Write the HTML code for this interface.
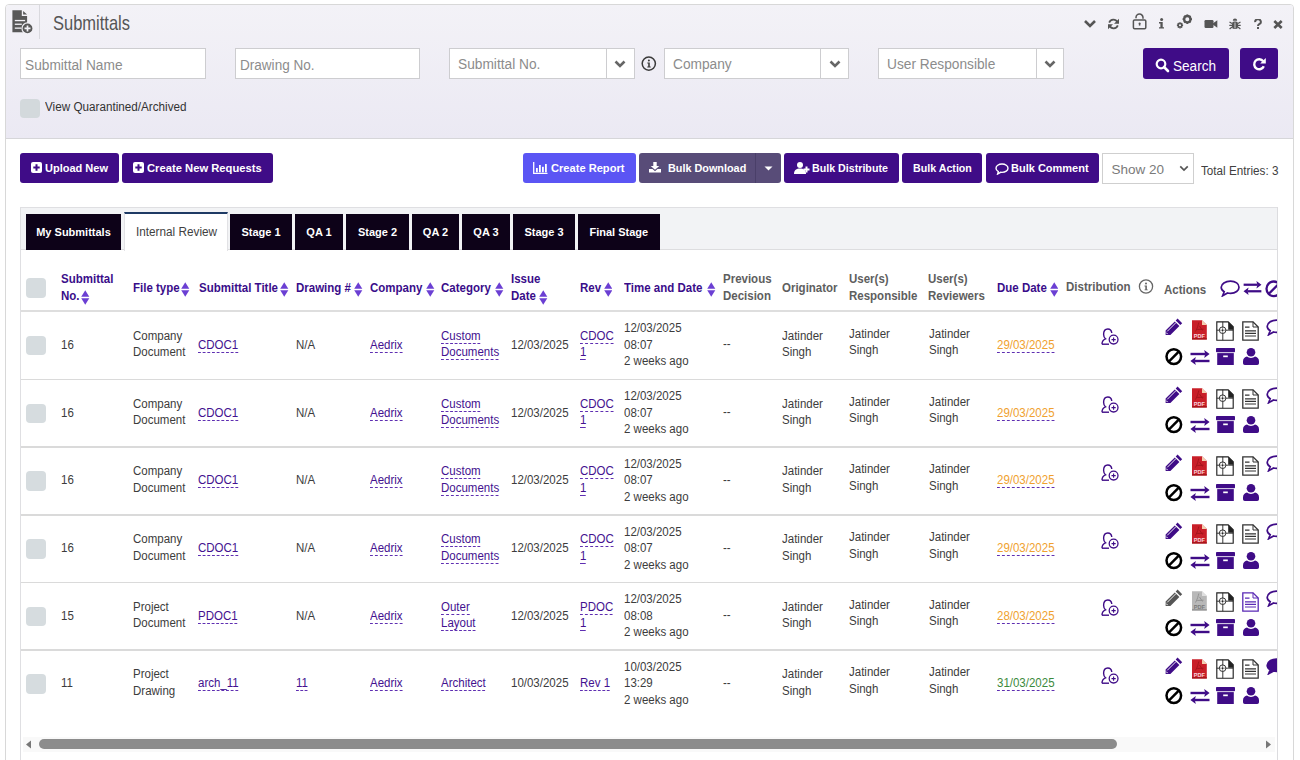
<!DOCTYPE html><html><head><meta charset="utf-8"><style>
*{box-sizing:border-box;margin:0;padding:0}
html,body{width:1300px;height:760px;overflow:hidden;background:#fff;font-family:"Liberation Sans",sans-serif;color:#333}
.a{position:absolute}
.t{white-space:nowrap}
.inp{position:absolute;background:#fff;border:1px solid #cdcdd0;height:31px}
.btn{position:absolute;height:30px;border-radius:3px;background:#3f0c87}
.lk{text-decoration:underline dashed #5b2ab0;text-underline-offset:3px;text-decoration-thickness:1px}
.cb{position:absolute;width:20px;height:20px;border-radius:4px;background:#d6dcdf}
svg{display:block}
</style></head><body>
<div class="a" style="left:5px;top:4px;width:1289px;height:800px;border:1px solid #d8d8d8;border-radius:4px 4px 0 0;background:#fff;overflow:hidden"><div class="a" style="left:0;top:0;width:1287px;height:134px;background:linear-gradient(#f3f2f7,#ebe9f3);border-bottom:1px solid #d6d6d9"></div></div>
<div class="a" style="left:39px;top:5px;width:1px;height:34px;background:#d9d9de"></div>
<svg class="a" style="left:11px;top:9px" width="24" height="26" viewBox="0 0 24 26">
<path d="M1.4 1.2H10.8V7.1H16.1V23.3H1.4Z" fill="#585858"/>
<path d="M12.1 2.1L16.1 5.6H12.1Z" fill="#585858"/>
<rect x="3.8" y="10.9" width="10.3" height="1.3" fill="#f2f1f6"/>
<rect x="3.8" y="14.6" width="7" height="1.3" fill="#f2f1f6"/>
<rect x="3.8" y="18.5" width="6.5" height="1.3" fill="#f2f1f6"/>
<circle cx="16.5" cy="19.4" r="6.1" fill="#f2f1f6"/>
<circle cx="16.5" cy="19.4" r="4.9" fill="#585858"/>
<path d="M16.5 16.4V22.4M13.5 19.4H19.5" stroke="#f2f1f6" stroke-width="1.7"/>
</svg>
<div class="a t" style="left:53px;top:12.3px;font-size:19px;line-height:22px;color:#555;transform:scale(0.868,1.07);transform-origin:0 0">Submittals</div>
<svg class="a" style="left:1083px;top:19px" width="14" height="10" viewBox="0 0 14 10"><path d="M2 2L7 7L12 2" fill="none" stroke="#555" stroke-width="2.6"/></svg>
<svg class="a" style="left:1107px;top:18px" width="13" height="12" viewBox="0 0 13 12"><path d="M10.4 4.3A4.4 4.4 0 0 0 2.2 4.6" fill="none" stroke="#555" stroke-width="1.7"/><path d="M12 0.8V5.8H7Z" fill="#555"/><path d="M2.6 7.7A4.4 4.4 0 0 0 10.8 7.4" fill="none" stroke="#555" stroke-width="1.7"/><path d="M1 11.2V6.2H6Z" fill="#555"/></svg>
<svg class="a" style="left:1131px;top:13px" width="17" height="17" viewBox="0 0 17 17"><path d="M5 5.2V4.6A3.5 3.5 0 0 1 12 4.6V5.8" fill="none" stroke="#555" stroke-width="1.5"/><rect x="2.4" y="6.9" width="12.4" height="8.9" rx="1.2" fill="none" stroke="#555" stroke-width="1.5"/><path d="M8.6 10.2V12.6" stroke="#555" stroke-width="1.5"/><circle cx="8.6" cy="10.4" r="1" fill="#555"/></svg>
<svg class="a" style="left:1158px;top:18px" width="7" height="11" viewBox="0 0 7 11"><circle cx="3.6" cy="1.5" r="1.5" fill="#555"/><path d="M1 4H4.7V9.2H6V10.6H1V9.2H2.4V5.4H1Z" fill="#555"/></svg>
<svg class="a" style="left:1176px;top:14px" width="17" height="15" viewBox="0 0 17 15"><circle cx="11.3" cy="5.2" r="3.2" fill="none" stroke="#555" stroke-width="2.4"/><path d="M11.3 0.5V2M11.3 8.4V9.9M6.6 5.2H8.1M14.5 5.2H16M8 1.9L9 2.9M13.6 7.5L14.6 8.5M8 8.5L9 7.5M13.6 2.9L14.6 1.9" stroke="#555" stroke-width="1.8"/><circle cx="4" cy="11.3" r="1.8" fill="none" stroke="#555" stroke-width="1.5"/><path d="M4 8.2V9.4M4 13.2V14.4M0.9 11.3H2.1M5.9 11.3H7.1M1.8 9.1L2.6 9.9M5.4 12.7L6.2 13.5M1.8 13.5L2.6 12.7M5.4 9.9L6.2 9.1" stroke="#555" stroke-width="1.4"/></svg>
<svg class="a" style="left:1204px;top:19px" width="14" height="10" viewBox="0 0 14 10"><rect x="0.5" y="1" width="9" height="8" rx="1.2" fill="#555"/><path d="M9 4.2L13.3 1.2V8.8L9 5.8Z" fill="#555"/></svg>
<svg class="a" style="left:1229px;top:18px" width="12" height="12" viewBox="0 0 12 12"><path d="M3.8 2.8A2.2 2.2 0 0 1 8.2 2.8Z" fill="#555"/><rect x="3" y="3.6" width="6" height="7.4" rx="2.2" fill="#555"/><path d="M0.5 4L3 5.5M11.5 4L9 5.5M0.3 7.3H3M11.7 7.3H9M0.6 11L3 9M11.4 11L9 9" stroke="#555" stroke-width="1.2"/><path d="M6 4.5V10.5" stroke="#eeedf3" stroke-width="0.8"/></svg>
<svg class="a" style="left:1254px;top:19px" width="8" height="10" viewBox="0 0 8 10"><path d="M1.2 3.2A2.8 2.6 0 1 1 5.2 5.2C4.2 5.8 4 6.2 4 7" fill="none" stroke="#555" stroke-width="2"/><rect x="3" y="8" width="2" height="2" fill="#555"/></svg>
<svg class="a" style="left:1273px;top:20px" width="10" height="9" viewBox="0 0 10 9"><path d="M1.3 1L8.7 8M8.7 1L1.3 8" stroke="#555" stroke-width="2.6"/></svg>
<div class="inp" style="left:20px;top:48px;width:186px"></div>
<div class="a t" style="left:25.4px;top:57.00px;font-size:14px;line-height:16.1px;color:#8c8c8c;transform:scaleX(0.979);transform-origin:0 0;">Submittal Name</div>
<div class="inp" style="left:235px;top:48px;width:185px"></div>
<div class="a t" style="left:240px;top:57.00px;font-size:14px;line-height:16.1px;color:#8c8c8c;transform:scaleX(0.968);transform-origin:0 0;">Drawing No.</div>
<div class="inp" style="left:449px;top:48px;width:186px"></div>
<div class="a t" style="left:458px;top:55.90px;font-size:14px;line-height:16.1px;color:#8c8c8c;transform:scaleX(0.98);transform-origin:0 0;">Submittal No.</div>
<div class="a" style="left:606px;top:48px;width:1px;height:31px;background:#cdcdd0"></div>
<svg class="a" style="left:614px;top:60px" width="12" height="8" viewBox="0 0 12 8"><path d="M1.5 1.5L6 6L10.5 1.5" fill="none" stroke="#666" stroke-width="2.6"/></svg>
<svg class="a" style="left:641px;top:56px" width="16" height="16" viewBox="0 0 16 16"><circle cx="7.8" cy="7.6" r="6.6" fill="none" stroke="#3a3a3a" stroke-width="1.5"/><circle cx="7.9" cy="4.6" r="1" fill="#3a3a3a"/><path d="M6.3 6.6H8.8V10.6H9.7V11.5H6.3V10.6H7.2V7.5H6.3Z" fill="#3a3a3a"/></svg>
<div class="inp" style="left:664px;top:48px;width:185px"></div>
<div class="a t" style="left:672.5px;top:55.90px;font-size:14px;line-height:16.1px;color:#8c8c8c;transform:scaleX(0.98);transform-origin:0 0;">Company</div>
<div class="a" style="left:820px;top:48px;width:1px;height:31px;background:#cdcdd0"></div>
<svg class="a" style="left:829px;top:60px" width="12" height="8" viewBox="0 0 12 8"><path d="M1.5 1.5L6 6L10.5 1.5" fill="none" stroke="#666" stroke-width="2.6"/></svg>
<div class="inp" style="left:878px;top:48px;width:186px"></div>
<div class="a t" style="left:887px;top:55.90px;font-size:14px;line-height:16.1px;color:#8c8c8c;transform:scaleX(0.98);transform-origin:0 0;">User Responsible</div>
<div class="a" style="left:1036px;top:48px;width:1px;height:31px;background:#cdcdd0"></div>
<svg class="a" style="left:1044px;top:60px" width="12" height="8" viewBox="0 0 12 8"><path d="M1.5 1.5L6 6L10.5 1.5" fill="none" stroke="#666" stroke-width="2.6"/></svg>
<div class="btn" style="left:1143px;top:48px;width:86px;height:31px"></div>
<div class="a t" style="left:1173px;top:58.40px;font-size:14px;line-height:16.1px;color:#fff;transform:scaleX(0.97);transform-origin:0 0;">Search</div>
<svg class="a" style="left:1155px;top:58px" width="15" height="15" viewBox="0 0 15 15"><circle cx="6" cy="6" r="4.3" fill="none" stroke="#fff" stroke-width="2.2"/><path d="M9 9L13 13" stroke="#fff" stroke-width="2.6" stroke-linecap="round"/></svg>
<div class="btn" style="left:1240px;top:48px;width:38px;height:31px"></div>
<svg class="a" style="left:1252px;top:57px" width="15" height="14" viewBox="0 0 15 14"><path d="M11.2 4.2A5 5 0 1 0 11.8 9.2" fill="none" stroke="#fff" stroke-width="2.4"/><path d="M13.8 1V6.6H8.2Z" fill="#fff"/></svg>
<div class="cb" style="left:20.4px;top:98.5px;width:19.3px;height:19.3px;background:#d3d9dc"></div>
<div class="a t" style="left:44.8px;top:100.74px;font-size:12px;line-height:13.8px;color:#333;transform:scaleX(0.975);transform-origin:0 0;">View Quarantined/Archived</div>
<div class="btn" style="left:20px;top:153px;width:99px"></div>
<svg class="a" style="left:31px;top:162px" width="11" height="11" viewBox="0 0 11 11"><rect x="0" y="0" width="11" height="11" rx="2" fill="#fff"/><path d="M5.5 2.3V8.7M2.3 5.5H8.7" stroke="#3f0c87" stroke-width="2"/></svg>
<div class="a t" style="left:45px;top:162.26px;font-size:11px;line-height:12.65px;color:#fff;font-weight:bold;">Upload New</div>
<div class="btn" style="left:122px;top:153px;width:151px"></div>
<svg class="a" style="left:133px;top:162px" width="11" height="11" viewBox="0 0 11 11"><rect x="0" y="0" width="11" height="11" rx="2" fill="#fff"/><path d="M5.5 2.3V8.7M2.3 5.5H8.7" stroke="#3f0c87" stroke-width="2"/></svg>
<div class="a t" style="left:147px;top:162.26px;font-size:11px;line-height:12.65px;color:#fff;font-weight:bold;transform:scaleX(1.02);transform-origin:0 0;">Create New Requests</div>
<div class="btn" style="left:523px;top:153px;width:113px;background:#5b55f4"></div>
<div class="a t" style="left:551px;top:162.26px;font-size:11px;line-height:12.65px;color:#fff;font-weight:bold;transform:scaleX(1.01);transform-origin:0 0;">Create Report</div>
<svg class="a" style="left:533px;top:162px" width="15" height="12" viewBox="0 0 15 12"><path d="M0.7 0V11.3H14.5" fill="none" stroke="#fff" stroke-width="1.3"/><rect x="3" y="6" width="1.8" height="4.3" fill="#fff"/><rect x="6" y="3" width="1.8" height="7.3" fill="#fff"/><rect x="9" y="4.8" width="1.8" height="5.5" fill="#fff"/><rect x="12" y="2" width="1.8" height="8.3" fill="#fff"/></svg>
<div class="btn" style="left:639px;top:153px;width:142px;background:#584c78"></div>
<div class="a" style="left:755px;top:153px;width:1px;height:30px;background:#4a3f69"></div>
<div class="a t" style="left:668px;top:162.26px;font-size:11px;line-height:12.65px;color:#fff;font-weight:bold;transform:scaleX(0.985);transform-origin:0 0;">Bulk Download</div>
<svg class="a" style="left:649px;top:162px" width="12" height="10.5" viewBox="0 0 12 12" preserveAspectRatio="none"><path d="M4.3 0H7.7V4.5H10.3L6 8.8L1.7 4.5H4.3Z" fill="#fff"/><path d="M0 8H3.5L6 10.5L8.5 8H12V12H0Z" fill="#fff"/></svg>
<svg class="a" style="left:764px;top:166px" width="9" height="5" viewBox="0 0 9 5"><path d="M0.5 0.5H8.5L4.5 4.5Z" fill="#fff"/></svg>
<div class="btn" style="left:784px;top:153px;width:115px"></div>
<div class="a t" style="left:812px;top:162.26px;font-size:11px;line-height:12.65px;color:#fff;font-weight:bold;transform:scaleX(0.97);transform-origin:0 0;">Bulk Distribute</div>
<svg class="a" style="left:794px;top:162px" width="16" height="12" viewBox="0 0 16 12"><circle cx="6" cy="3" r="3" fill="#fff"/><path d="M0 12C0 8 2.5 6.5 6 6.5S12 8 12 12Z" fill="#fff"/><path d="M12.5 4.5V10.5M9.5 7.5H15.5" stroke="#fff" stroke-width="2"/></svg>
<div class="btn" style="left:902px;top:153px;width:80px"></div>
<div class="a t" style="left:912.5px;top:162.26px;font-size:11px;line-height:12.65px;color:#fff;font-weight:bold;transform:scaleX(0.97);transform-origin:0 0;">Bulk Action</div>
<div class="btn" style="left:986px;top:153px;width:113px"></div>
<div class="a t" style="left:1011px;top:162.26px;font-size:11px;line-height:12.65px;color:#fff;font-weight:bold;">Bulk Comment</div>
<svg class="a" style="left:995px;top:163px" width="14" height="12" viewBox="0 0 14 12"><path d="M7 1C3.6 1 1 2.9 1 5.2C1 6.6 1.9 7.8 3.3 8.6L2.6 11L5.6 9.3C6.1 9.4 6.5 9.4 7 9.4C10.4 9.4 13 7.5 13 5.2S10.4 1 7 1Z" fill="none" stroke="#fff" stroke-width="1.4"/></svg>
<div class="a" style="left:1102px;top:153px;width:92px;height:31px;border:1px solid #cfcfcf;background:#fff"></div>
<div class="a t" style="left:1111.6px;top:162.36px;font-size:13.5px;line-height:15.52px;color:#7a7a7a;">Show 20</div>
<svg class="a" style="left:1179px;top:165px" width="10" height="7" viewBox="0 0 12 8"><path d="M1.5 1.5L6 6L10.5 1.5" fill="none" stroke="#555" stroke-width="2"/></svg>
<div class="a t" style="left:1200.5px;top:163.53px;font-size:12.5px;line-height:14.37px;color:#404040;transform:scaleX(0.936);transform-origin:0 0;">Total Entries: 3</div>
<div class="a" style="left:20px;top:207px;width:1258px;height:600px;border:1px solid #dfdfe2;background:#fff"></div>
<div class="a" style="left:21px;top:208px;width:1256px;height:42px;background:#f2f3f5;border-bottom:1px solid #dddddf"></div>
<div class="a" style="left:26px;top:214px;width:95px;height:36px;background:#0d0218"></div>
<div class="a t" style="left:26px;top:224.05px;width:95px;text-align:center;font-size:11px;line-height:16px;font-weight:bold;color:#fff">My Submittals</div>
<div class="a" style="left:124px;top:212px;width:104px;height:39px;background:#fff;border-left:1px solid #e2e2e5;border-right:1px solid #e2e2e5;border-top:2px solid #1e3a64"></div>
<div class="a t" style="left:135.8px;top:225.74px;font-size:12px;line-height:13.8px;color:#3f3f3f;transform:scaleX(0.98);transform-origin:0 0;">Internal Review</div>
<div class="a" style="left:230px;top:214px;width:62px;height:36px;background:#0d0218"></div>
<div class="a t" style="left:230px;top:224.05px;width:62px;text-align:center;font-size:11px;line-height:16px;font-weight:bold;color:#fff">Stage 1</div>
<div class="a" style="left:295px;top:214px;width:48px;height:36px;background:#0d0218"></div>
<div class="a t" style="left:295px;top:224.05px;width:48px;text-align:center;font-size:11px;line-height:16px;font-weight:bold;color:#fff">QA 1</div>
<div class="a" style="left:346px;top:214px;width:63px;height:36px;background:#0d0218"></div>
<div class="a t" style="left:346px;top:224.05px;width:63px;text-align:center;font-size:11px;line-height:16px;font-weight:bold;color:#fff">Stage 2</div>
<div class="a" style="left:412px;top:214px;width:47px;height:36px;background:#0d0218"></div>
<div class="a t" style="left:412px;top:224.05px;width:47px;text-align:center;font-size:11px;line-height:16px;font-weight:bold;color:#fff">QA 2</div>
<div class="a" style="left:462px;top:214px;width:48px;height:36px;background:#0d0218"></div>
<div class="a t" style="left:462px;top:224.05px;width:48px;text-align:center;font-size:11px;line-height:16px;font-weight:bold;color:#fff">QA 3</div>
<div class="a" style="left:513px;top:214px;width:62px;height:36px;background:#0d0218"></div>
<div class="a t" style="left:513px;top:224.05px;width:62px;text-align:center;font-size:11px;line-height:16px;font-weight:bold;color:#fff">Stage 3</div>
<div class="a" style="left:578px;top:214px;width:81.5px;height:36px;background:#0d0218"></div>
<div class="a t" style="left:578px;top:224.05px;width:81.5px;text-align:center;font-size:11px;line-height:16px;font-weight:bold;color:#fff">Final Stage</div>
<div class="cb" style="left:26px;top:278px"></div>
<div class="a t" style="left:61px;top:271.49px;font-size:12px;line-height:16.3px;color:#3a0d8a;font-weight:bold;transform:scaleX(0.958);transform-origin:0 0;">Submittal<br>No.</div>
<svg class="a" style="left:81.3px;top:290px" width="8.5" height="15" viewBox="0 0 8.5 15"><path d="M4.25 0.3L8.3 6.7H0.2Z" fill="#6b3fd3"/><path d="M4.25 14.7L8.3 8.3H0.2Z" fill="#6b3fd3"/></svg>
<div class="a t" style="left:132.5px;top:281.94px;font-size:12px;line-height:13.8px;color:#3a0d8a;font-weight:bold;transform:scaleX(0.958);transform-origin:0 0;">File type</div>
<svg class="a" style="left:181.4px;top:282.3px" width="8.5" height="15" viewBox="0 0 8.5 15"><path d="M4.25 0.3L8.3 6.7H0.2Z" fill="#6b3fd3"/><path d="M4.25 14.7L8.3 8.3H0.2Z" fill="#6b3fd3"/></svg>
<div class="a t" style="left:198.5px;top:281.94px;font-size:12px;line-height:13.8px;color:#3a0d8a;font-weight:bold;transform:scaleX(0.958);transform-origin:0 0;">Submittal Title</div>
<svg class="a" style="left:280.2px;top:282.3px" width="8.5" height="15" viewBox="0 0 8.5 15"><path d="M4.25 0.3L8.3 6.7H0.2Z" fill="#6b3fd3"/><path d="M4.25 14.7L8.3 8.3H0.2Z" fill="#6b3fd3"/></svg>
<div class="a t" style="left:296px;top:281.94px;font-size:12px;line-height:13.8px;color:#3a0d8a;font-weight:bold;transform:scaleX(0.958);transform-origin:0 0;">Drawing #</div>
<svg class="a" style="left:354.2px;top:282.3px" width="8.5" height="15" viewBox="0 0 8.5 15"><path d="M4.25 0.3L8.3 6.7H0.2Z" fill="#6b3fd3"/><path d="M4.25 14.7L8.3 8.3H0.2Z" fill="#6b3fd3"/></svg>
<div class="a t" style="left:370px;top:281.94px;font-size:12px;line-height:13.8px;color:#3a0d8a;font-weight:bold;transform:scaleX(0.958);transform-origin:0 0;">Company</div>
<svg class="a" style="left:426.2px;top:282.3px" width="8.5" height="15" viewBox="0 0 8.5 15"><path d="M4.25 0.3L8.3 6.7H0.2Z" fill="#6b3fd3"/><path d="M4.25 14.7L8.3 8.3H0.2Z" fill="#6b3fd3"/></svg>
<div class="a t" style="left:441.2px;top:281.94px;font-size:12px;line-height:13.8px;color:#3a0d8a;font-weight:bold;transform:scaleX(0.958);transform-origin:0 0;">Category</div>
<svg class="a" style="left:495px;top:282.3px" width="8.5" height="15" viewBox="0 0 8.5 15"><path d="M4.25 0.3L8.3 6.7H0.2Z" fill="#6b3fd3"/><path d="M4.25 14.7L8.3 8.3H0.2Z" fill="#6b3fd3"/></svg>
<div class="a t" style="left:580px;top:281.94px;font-size:12px;line-height:13.8px;color:#3a0d8a;font-weight:bold;transform:scaleX(0.958);transform-origin:0 0;">Rev</div>
<svg class="a" style="left:603.8px;top:282.3px" width="8.5" height="15" viewBox="0 0 8.5 15"><path d="M4.25 0.3L8.3 6.7H0.2Z" fill="#6b3fd3"/><path d="M4.25 14.7L8.3 8.3H0.2Z" fill="#6b3fd3"/></svg>
<div class="a t" style="left:624.2px;top:281.94px;font-size:12px;line-height:13.8px;color:#3a0d8a;font-weight:bold;transform:scaleX(0.958);transform-origin:0 0;">Time and Date</div>
<svg class="a" style="left:707px;top:282.3px" width="8.5" height="15" viewBox="0 0 8.5 15"><path d="M4.25 0.3L8.3 6.7H0.2Z" fill="#6b3fd3"/><path d="M4.25 14.7L8.3 8.3H0.2Z" fill="#6b3fd3"/></svg>
<div class="a t" style="left:997px;top:281.94px;font-size:12px;line-height:13.8px;color:#3a0d8a;font-weight:bold;transform:scaleX(0.958);transform-origin:0 0;">Due Date</div>
<svg class="a" style="left:1049.7px;top:282.3px" width="8.5" height="15" viewBox="0 0 8.5 15"><path d="M4.25 0.3L8.3 6.7H0.2Z" fill="#6b3fd3"/><path d="M4.25 14.7L8.3 8.3H0.2Z" fill="#6b3fd3"/></svg>
<div class="a t" style="left:510.8px;top:271.49px;font-size:12px;line-height:16.3px;color:#3a0d8a;font-weight:bold;transform:scaleX(0.958);transform-origin:0 0;">Issue<br>Date</div>
<svg class="a" style="left:539.2px;top:290px" width="8.5" height="15" viewBox="0 0 8.5 15"><path d="M4.25 0.3L8.3 6.7H0.2Z" fill="#6b3fd3"/><path d="M4.25 14.7L8.3 8.3H0.2Z" fill="#6b3fd3"/></svg>
<div class="a t" style="left:722.5px;top:271.49px;font-size:12px;line-height:16.3px;color:#5e5e5e;font-weight:bold;transform:scaleX(0.958);transform-origin:0 0;">Previous<br>Decision</div>
<div class="a t" style="left:781.8px;top:281.94px;font-size:12px;line-height:13.8px;color:#5e5e5e;font-weight:bold;transform:scaleX(0.958);transform-origin:0 0;">Originator</div>
<div class="a t" style="left:848.8px;top:271.49px;font-size:12px;line-height:16.3px;color:#5e5e5e;font-weight:bold;transform:scaleX(0.958);transform-origin:0 0;">User(s)<br>Responsible</div>
<div class="a t" style="left:928.3px;top:271.49px;font-size:12px;line-height:16.3px;color:#5e5e5e;font-weight:bold;transform:scaleX(0.958);transform-origin:0 0;">User(s)<br>Reviewers</div>
<div class="a t" style="left:1066.2px;top:280.74px;font-size:12px;line-height:13.8px;color:#5e5e5e;font-weight:bold;transform:scaleX(0.958);transform-origin:0 0;">Distribution</div>
<svg class="a" style="left:1138px;top:279px" width="16" height="16" viewBox="0 0 16 16"><circle cx="8" cy="7.5" r="6.6" fill="none" stroke="#666" stroke-width="1.3"/><circle cx="8" cy="4.6" r="1" fill="#666"/><path d="M6.5 6.5H8.9V10.4H9.8V11.3H6.5V10.4H7.3V7.4H6.5Z" fill="#666"/></svg>
<div class="a t" style="left:1164px;top:283.94px;font-size:12px;line-height:13.8px;color:#5e5e5e;font-weight:bold;transform:scaleX(0.958);transform-origin:0 0;">Actions</div>
<svg class="a" style="left:1220px;top:280px" width="20" height="17" viewBox="0 0 20 17"><path d="M10.5 1.2C5.3 1.2 1.2 3.8 1.2 7.2C1.2 9 2.3 10.6 4.2 11.7L2.6 15.8L7.6 13C8.6 13.2 9.5 13.3 10.5 13.3C15.6 13.3 19 10.6 19 7.2S15.6 1.2 10.5 1.2Z" fill="none" stroke="#3f0c87" stroke-width="1.7"/></svg>
<svg class="a" style="left:1242px;top:281px" width="21" height="14" viewBox="0 0 20 15"><path d="M0.5 4H15.5" stroke="#3f0c87" stroke-width="2.4"/><path d="M14.2 0L19.6 4L14.2 8L15.2 4Z" fill="#3f0c87"/><path d="M4.5 11H19.5" stroke="#3f0c87" stroke-width="2.4"/><path d="M5.8 7L0.4 11L5.8 15L4.8 11Z" fill="#3f0c87"/></svg>
<div class="a" style="left:1265px;top:280px;width:13px;height:18px;overflow:hidden"><svg width="18" height="18" viewBox="0 0 18 18"><circle cx="8.8" cy="8.8" r="7.3" fill="none" stroke="#3f0c87" stroke-width="2.3"/><path d="M3.6 14L14 3.6" stroke="#3f0c87" stroke-width="2.3"/></svg></div>
<div class="a" style="left:21px;top:310px;width:1256px;height:2px;background:#dedede"></div>
<div class="a" style="left:21px;top:378.5px;width:1256px;height:1.5px;background:#dadada"></div>
<div class="cb" style="left:26px;top:335.5px;width:19.5px;height:19.5px"></div>
<div class="a t" style="left:61px;top:338.74px;font-size:12px;line-height:13.8px;color:#3c3c3c;transform:scaleX(0.958);transform-origin:0 0;">16</div>
<div class="a t" style="left:132.5px;top:327.79px;font-size:12px;line-height:16.5px;color:#3c3c3c;transform:scaleX(0.958);transform-origin:0 0;">Company<br>Document</div>
<div class="a t" style="left:198px;top:338.74px;font-size:12px;line-height:13.8px;color:#43118f;transform:scaleX(0.958);transform-origin:0 0;"><span class="lk">CDOC1</span></div>
<div class="a t" style="left:296px;top:338.74px;font-size:12px;line-height:13.8px;color:#3c3c3c;transform:scaleX(0.958);transform-origin:0 0;">N/A</div>
<div class="a t" style="left:370px;top:338.74px;font-size:12px;line-height:13.8px;color:#43118f;transform:scaleX(0.958);transform-origin:0 0;"><span class="lk">Aedrix</span></div>
<div class="a t" style="left:441.2px;top:327.79px;font-size:12px;line-height:16.5px;color:#43118f;transform:scaleX(0.958);transform-origin:0 0;"><span class="lk">Custom</span><br><span class="lk">Documents</span></div>
<div class="a t" style="left:511px;top:338.74px;font-size:12px;line-height:13.8px;color:#3c3c3c;transform:scaleX(0.958);transform-origin:0 0;">12/03/2025</div>
<div class="a t" style="left:580px;top:327.79px;font-size:12px;line-height:16.5px;color:#43118f;transform:scaleX(0.958);transform-origin:0 0;"><span class="lk">CDOC</span><br><span class="lk">1</span></div>
<div class="a t" style="left:624.2px;top:320.04px;font-size:12px;line-height:16.6px;color:#3c3c3c;transform:scaleX(0.958);transform-origin:0 0;">12/03/2025<br>08:07<br>2 weeks ago</div>
<div class="a t" style="left:722.5px;top:338.24px;font-size:12px;line-height:13.8px;color:#3c3c3c;transform:scaleX(0.958);transform-origin:0 0;">--</div>
<div class="a t" style="left:782px;top:327.79px;font-size:12px;line-height:16.5px;color:#3c3c3c;transform:scaleX(0.958);transform-origin:0 0;">Jatinder<br>Singh</div>
<div class="a t" style="left:848.8px;top:325.99px;font-size:12px;line-height:16.5px;color:#3c3c3c;transform:scaleX(0.958);transform-origin:0 0;">Jatinder<br>Singh</div>
<div class="a t" style="left:928.5px;top:325.99px;font-size:12px;line-height:16.5px;color:#3c3c3c;transform:scaleX(0.958);transform-origin:0 0;">Jatinder<br>Singh</div>
<div class="a t" style="left:997px;top:338.74px;font-size:12px;line-height:13.8px;color:#f0a12e;transform:scaleX(0.958);transform-origin:0 0;"><span class="lk" style="color:#f0a12e">29/03/2025</span></div>
<svg class="a" style="left:1101px;top:328px" width="18" height="17" viewBox="0 0 18 17"><path d="M1 16.2C1 13 2.6 11.5 4.5 10.8C3.2 9.8 2.6 8.3 2.6 6.3C2.6 3 4.3 1 6.8 1C8.9 1 10.5 2.6 10.8 5" fill="none" stroke="#3f0c87" stroke-width="1.4"/><path d="M1 16.2H8" stroke="#3f0c87" stroke-width="1.4"/><circle cx="12.6" cy="11.6" r="4.4" fill="none" stroke="#3f0c87" stroke-width="1.3"/><path d="M12.6 9.5V13.7M10.5 11.6H14.7" stroke="#3f0c87" stroke-width="1.1"/></svg>
<svg class="a" style="left:1164.5px;top:318.3px" width="18" height="17" viewBox="0 0 18 17"><path d="M12.6 0.6L17.2 5.2L15.3 7.1L10.7 2.5Z" fill="#3f0c87"/><path d="M9.8 3.4L14.4 8L5.2 17.2L0.6 17.2L0.6 12.6Z" fill="#3f0c87"/><path d="M2.2 13.4L11.2 4.4" stroke="#fff" stroke-width="0.9"/><path d="M1.2 14.6L2.6 16.1" stroke="#fff" stroke-width="1"/></svg>
<svg class="a" style="left:1192px;top:320.3px" width="15" height="20" viewBox="0 0 15 20"><path d="M0 0.3H10L14.8 5.1V19.5H0Z" fill="#c91f28"/><path d="M10 0.3V5.1H14.8Z" fill="#f2d0b0"/><path d="M6.8 2.5C6.2 5 5.5 8 3.5 11.5M5.2 9.5L11.5 9.2M7.5 6L10.5 10.5" stroke="#a0141b" stroke-width="0.9" fill="none"/><rect x="0" y="18.2" width="14.8" height="1.3" fill="#a0141b"/><text x="1.8" y="17.6" font-family="Liberation Sans" font-size="5.6" font-weight="bold" fill="#f5d5dc">PDF</text></svg>
<svg class="a" style="left:1215.5px;top:320.5px" width="18" height="20" viewBox="0 0 18 20"><path d="M0.8 0.8H12.2L17.2 5.8V19.2H0.8Z" fill="none" stroke="#222" stroke-width="1.15"/><path d="M12.2 0.8L17.2 5.8V8.8H12.2Z" fill="#222"/><path d="M6.8 0.8V19.2M0.8 9.2H12.2M12.2 9.2H17.2" stroke="#222" stroke-width="0.9"/><circle cx="6.6" cy="9.2" r="3.3" fill="#fff" stroke="#222" stroke-width="0.9"/><circle cx="6.6" cy="9.2" r="0.8" fill="#222"/><path d="M6.6 5.9V12.5M3.3 9.2H9.9" stroke="#222" stroke-width="0.5"/></svg>
<svg class="a" style="left:1242px;top:320.5px" width="17" height="20" viewBox="0 0 17 20"><path d="M0.8 0.8H11L16.2 6V19.2H0.8Z" fill="#fff" stroke="#333" stroke-width="1.3"/><path d="M11 0.8V6H16.2" fill="none" stroke="#333" stroke-width="1"/><path d="M3 6.2H7.5M3 9.8H14M3 12.4H14M3 15H14" stroke="#333" stroke-width="1.2"/></svg>
<div class="a" style="left:1266px;top:319px;width:11.5px;height:18px;overflow:hidden"><svg width="20" height="17" viewBox="0 0 20 17"><path d="M10.5 1.2C5.3 1.2 1.2 3.8 1.2 7.2C1.2 9 2.3 10.6 4.2 11.7L2.6 15.8L7.6 13C8.6 13.2 9.5 13.3 10.5 13.3C15.6 13.3 19 10.6 19 7.2S15.6 1.2 10.5 1.2Z" fill="none" stroke="#3f0c87" stroke-width="1.7"/></svg></div>
<svg class="a" style="left:1164.5px;top:348px" width="18" height="18" viewBox="0 0 18 18"><circle cx="8.8" cy="8.6" r="7.3" fill="none" stroke="#000" stroke-width="2.5"/><path d="M3.6 13.8L14 3.4" stroke="#000" stroke-width="2.5"/></svg>
<svg class="a" style="left:1189.5px;top:350px" width="20" height="15" viewBox="0 0 20 15"><path d="M0.5 4H15.5" stroke="#3f0c87" stroke-width="2.4"/><path d="M14.2 0L19.6 4L14.2 8L15.2 4Z" fill="#3f0c87"/><path d="M4.5 11H19.5" stroke="#3f0c87" stroke-width="2.4"/><path d="M5.8 7L0.4 11L5.8 15L4.8 11Z" fill="#3f0c87"/></svg>
<svg class="a" style="left:1215.5px;top:348.2px" width="19" height="17" viewBox="0 0 19 17"><rect x="0" y="0" width="19" height="4.2" rx="0.8" fill="#3f0c87"/><rect x="1.2" y="5.1" width="16.6" height="11.9" fill="#3f0c87"/><rect x="7.2" y="7.5" width="4.6" height="1.7" fill="#fff"/></svg>
<svg class="a" style="left:1243px;top:348.2px" width="16" height="17" viewBox="0 0 16 17"><circle cx="8" cy="4.3" r="4.3" fill="#3f0c87"/><path d="M0 15.2V13.2C0 10.6 2 9 4 8.6C5 9.5 6.4 10 8 10S11 9.5 12 8.6C14 9 16 10.6 16 13.2V15.2Q16 17 14.2 17H1.8Q0 17 0 15.2Z" fill="#3f0c87"/></svg>
<div class="a" style="left:21px;top:446.0px;width:1256px;height:1.5px;background:#dadada"></div>
<div class="cb" style="left:26px;top:403.5px;width:19.5px;height:19.5px"></div>
<div class="a t" style="left:61px;top:406.74px;font-size:12px;line-height:13.8px;color:#3c3c3c;transform:scaleX(0.958);transform-origin:0 0;">16</div>
<div class="a t" style="left:132.5px;top:395.79px;font-size:12px;line-height:16.5px;color:#3c3c3c;transform:scaleX(0.958);transform-origin:0 0;">Company<br>Document</div>
<div class="a t" style="left:198px;top:406.74px;font-size:12px;line-height:13.8px;color:#43118f;transform:scaleX(0.958);transform-origin:0 0;"><span class="lk">CDOC1</span></div>
<div class="a t" style="left:296px;top:406.74px;font-size:12px;line-height:13.8px;color:#3c3c3c;transform:scaleX(0.958);transform-origin:0 0;">N/A</div>
<div class="a t" style="left:370px;top:406.74px;font-size:12px;line-height:13.8px;color:#43118f;transform:scaleX(0.958);transform-origin:0 0;"><span class="lk">Aedrix</span></div>
<div class="a t" style="left:441.2px;top:395.79px;font-size:12px;line-height:16.5px;color:#43118f;transform:scaleX(0.958);transform-origin:0 0;"><span class="lk">Custom</span><br><span class="lk">Documents</span></div>
<div class="a t" style="left:511px;top:406.74px;font-size:12px;line-height:13.8px;color:#3c3c3c;transform:scaleX(0.958);transform-origin:0 0;">12/03/2025</div>
<div class="a t" style="left:580px;top:395.79px;font-size:12px;line-height:16.5px;color:#43118f;transform:scaleX(0.958);transform-origin:0 0;"><span class="lk">CDOC</span><br><span class="lk">1</span></div>
<div class="a t" style="left:624.2px;top:388.04px;font-size:12px;line-height:16.6px;color:#3c3c3c;transform:scaleX(0.958);transform-origin:0 0;">12/03/2025<br>08:07<br>2 weeks ago</div>
<div class="a t" style="left:722.5px;top:406.24px;font-size:12px;line-height:13.8px;color:#3c3c3c;transform:scaleX(0.958);transform-origin:0 0;">--</div>
<div class="a t" style="left:782px;top:395.79px;font-size:12px;line-height:16.5px;color:#3c3c3c;transform:scaleX(0.958);transform-origin:0 0;">Jatinder<br>Singh</div>
<div class="a t" style="left:848.8px;top:393.99px;font-size:12px;line-height:16.5px;color:#3c3c3c;transform:scaleX(0.958);transform-origin:0 0;">Jatinder<br>Singh</div>
<div class="a t" style="left:928.5px;top:393.99px;font-size:12px;line-height:16.5px;color:#3c3c3c;transform:scaleX(0.958);transform-origin:0 0;">Jatinder<br>Singh</div>
<div class="a t" style="left:997px;top:406.74px;font-size:12px;line-height:13.8px;color:#f0a12e;transform:scaleX(0.958);transform-origin:0 0;"><span class="lk" style="color:#f0a12e">29/03/2025</span></div>
<svg class="a" style="left:1101px;top:396px" width="18" height="17" viewBox="0 0 18 17"><path d="M1 16.2C1 13 2.6 11.5 4.5 10.8C3.2 9.8 2.6 8.3 2.6 6.3C2.6 3 4.3 1 6.8 1C8.9 1 10.5 2.6 10.8 5" fill="none" stroke="#3f0c87" stroke-width="1.4"/><path d="M1 16.2H8" stroke="#3f0c87" stroke-width="1.4"/><circle cx="12.6" cy="11.6" r="4.4" fill="none" stroke="#3f0c87" stroke-width="1.3"/><path d="M12.6 9.5V13.7M10.5 11.6H14.7" stroke="#3f0c87" stroke-width="1.1"/></svg>
<svg class="a" style="left:1164.5px;top:386.3px" width="18" height="17" viewBox="0 0 18 17"><path d="M12.6 0.6L17.2 5.2L15.3 7.1L10.7 2.5Z" fill="#3f0c87"/><path d="M9.8 3.4L14.4 8L5.2 17.2L0.6 17.2L0.6 12.6Z" fill="#3f0c87"/><path d="M2.2 13.4L11.2 4.4" stroke="#fff" stroke-width="0.9"/><path d="M1.2 14.6L2.6 16.1" stroke="#fff" stroke-width="1"/></svg>
<svg class="a" style="left:1192px;top:388.3px" width="15" height="20" viewBox="0 0 15 20"><path d="M0 0.3H10L14.8 5.1V19.5H0Z" fill="#c91f28"/><path d="M10 0.3V5.1H14.8Z" fill="#f2d0b0"/><path d="M6.8 2.5C6.2 5 5.5 8 3.5 11.5M5.2 9.5L11.5 9.2M7.5 6L10.5 10.5" stroke="#a0141b" stroke-width="0.9" fill="none"/><rect x="0" y="18.2" width="14.8" height="1.3" fill="#a0141b"/><text x="1.8" y="17.6" font-family="Liberation Sans" font-size="5.6" font-weight="bold" fill="#f5d5dc">PDF</text></svg>
<svg class="a" style="left:1215.5px;top:388.5px" width="18" height="20" viewBox="0 0 18 20"><path d="M0.8 0.8H12.2L17.2 5.8V19.2H0.8Z" fill="none" stroke="#222" stroke-width="1.15"/><path d="M12.2 0.8L17.2 5.8V8.8H12.2Z" fill="#222"/><path d="M6.8 0.8V19.2M0.8 9.2H12.2M12.2 9.2H17.2" stroke="#222" stroke-width="0.9"/><circle cx="6.6" cy="9.2" r="3.3" fill="#fff" stroke="#222" stroke-width="0.9"/><circle cx="6.6" cy="9.2" r="0.8" fill="#222"/><path d="M6.6 5.9V12.5M3.3 9.2H9.9" stroke="#222" stroke-width="0.5"/></svg>
<svg class="a" style="left:1242px;top:388.5px" width="17" height="20" viewBox="0 0 17 20"><path d="M0.8 0.8H11L16.2 6V19.2H0.8Z" fill="#fff" stroke="#333" stroke-width="1.3"/><path d="M11 0.8V6H16.2" fill="none" stroke="#333" stroke-width="1"/><path d="M3 6.2H7.5M3 9.8H14M3 12.4H14M3 15H14" stroke="#333" stroke-width="1.2"/></svg>
<div class="a" style="left:1266px;top:387px;width:11.5px;height:18px;overflow:hidden"><svg width="20" height="17" viewBox="0 0 20 17"><path d="M10.5 1.2C5.3 1.2 1.2 3.8 1.2 7.2C1.2 9 2.3 10.6 4.2 11.7L2.6 15.8L7.6 13C8.6 13.2 9.5 13.3 10.5 13.3C15.6 13.3 19 10.6 19 7.2S15.6 1.2 10.5 1.2Z" fill="none" stroke="#3f0c87" stroke-width="1.7"/></svg></div>
<svg class="a" style="left:1164.5px;top:416px" width="18" height="18" viewBox="0 0 18 18"><circle cx="8.8" cy="8.6" r="7.3" fill="none" stroke="#000" stroke-width="2.5"/><path d="M3.6 13.8L14 3.4" stroke="#000" stroke-width="2.5"/></svg>
<svg class="a" style="left:1189.5px;top:418px" width="20" height="15" viewBox="0 0 20 15"><path d="M0.5 4H15.5" stroke="#3f0c87" stroke-width="2.4"/><path d="M14.2 0L19.6 4L14.2 8L15.2 4Z" fill="#3f0c87"/><path d="M4.5 11H19.5" stroke="#3f0c87" stroke-width="2.4"/><path d="M5.8 7L0.4 11L5.8 15L4.8 11Z" fill="#3f0c87"/></svg>
<svg class="a" style="left:1215.5px;top:416.2px" width="19" height="17" viewBox="0 0 19 17"><rect x="0" y="0" width="19" height="4.2" rx="0.8" fill="#3f0c87"/><rect x="1.2" y="5.1" width="16.6" height="11.9" fill="#3f0c87"/><rect x="7.2" y="7.5" width="4.6" height="1.7" fill="#fff"/></svg>
<svg class="a" style="left:1243px;top:416.2px" width="16" height="17" viewBox="0 0 16 17"><circle cx="8" cy="4.3" r="4.3" fill="#3f0c87"/><path d="M0 15.2V13.2C0 10.6 2 9 4 8.6C5 9.5 6.4 10 8 10S11 9.5 12 8.6C14 9 16 10.6 16 13.2V15.2Q16 17 14.2 17H1.8Q0 17 0 15.2Z" fill="#3f0c87"/></svg>
<div class="a" style="left:21px;top:514.0px;width:1256px;height:1.5px;background:#dadada"></div>
<div class="cb" style="left:26px;top:471.0px;width:19.5px;height:19.5px"></div>
<div class="a t" style="left:61px;top:474.24px;font-size:12px;line-height:13.8px;color:#3c3c3c;transform:scaleX(0.958);transform-origin:0 0;">16</div>
<div class="a t" style="left:132.5px;top:463.29px;font-size:12px;line-height:16.5px;color:#3c3c3c;transform:scaleX(0.958);transform-origin:0 0;">Company<br>Document</div>
<div class="a t" style="left:198px;top:474.24px;font-size:12px;line-height:13.8px;color:#43118f;transform:scaleX(0.958);transform-origin:0 0;"><span class="lk">CDOC1</span></div>
<div class="a t" style="left:296px;top:474.24px;font-size:12px;line-height:13.8px;color:#3c3c3c;transform:scaleX(0.958);transform-origin:0 0;">N/A</div>
<div class="a t" style="left:370px;top:474.24px;font-size:12px;line-height:13.8px;color:#43118f;transform:scaleX(0.958);transform-origin:0 0;"><span class="lk">Aedrix</span></div>
<div class="a t" style="left:441.2px;top:463.29px;font-size:12px;line-height:16.5px;color:#43118f;transform:scaleX(0.958);transform-origin:0 0;"><span class="lk">Custom</span><br><span class="lk">Documents</span></div>
<div class="a t" style="left:511px;top:474.24px;font-size:12px;line-height:13.8px;color:#3c3c3c;transform:scaleX(0.958);transform-origin:0 0;">12/03/2025</div>
<div class="a t" style="left:580px;top:463.29px;font-size:12px;line-height:16.5px;color:#43118f;transform:scaleX(0.958);transform-origin:0 0;"><span class="lk">CDOC</span><br><span class="lk">1</span></div>
<div class="a t" style="left:624.2px;top:455.54px;font-size:12px;line-height:16.6px;color:#3c3c3c;transform:scaleX(0.958);transform-origin:0 0;">12/03/2025<br>08:07<br>2 weeks ago</div>
<div class="a t" style="left:722.5px;top:473.74px;font-size:12px;line-height:13.8px;color:#3c3c3c;transform:scaleX(0.958);transform-origin:0 0;">--</div>
<div class="a t" style="left:782px;top:463.29px;font-size:12px;line-height:16.5px;color:#3c3c3c;transform:scaleX(0.958);transform-origin:0 0;">Jatinder<br>Singh</div>
<div class="a t" style="left:848.8px;top:461.49px;font-size:12px;line-height:16.5px;color:#3c3c3c;transform:scaleX(0.958);transform-origin:0 0;">Jatinder<br>Singh</div>
<div class="a t" style="left:928.5px;top:461.49px;font-size:12px;line-height:16.5px;color:#3c3c3c;transform:scaleX(0.958);transform-origin:0 0;">Jatinder<br>Singh</div>
<div class="a t" style="left:997px;top:474.24px;font-size:12px;line-height:13.8px;color:#f0a12e;transform:scaleX(0.958);transform-origin:0 0;"><span class="lk" style="color:#f0a12e">29/03/2025</span></div>
<svg class="a" style="left:1101px;top:463.5px" width="18" height="17" viewBox="0 0 18 17"><path d="M1 16.2C1 13 2.6 11.5 4.5 10.8C3.2 9.8 2.6 8.3 2.6 6.3C2.6 3 4.3 1 6.8 1C8.9 1 10.5 2.6 10.8 5" fill="none" stroke="#3f0c87" stroke-width="1.4"/><path d="M1 16.2H8" stroke="#3f0c87" stroke-width="1.4"/><circle cx="12.6" cy="11.6" r="4.4" fill="none" stroke="#3f0c87" stroke-width="1.3"/><path d="M12.6 9.5V13.7M10.5 11.6H14.7" stroke="#3f0c87" stroke-width="1.1"/></svg>
<svg class="a" style="left:1164.5px;top:453.8px" width="18" height="17" viewBox="0 0 18 17"><path d="M12.6 0.6L17.2 5.2L15.3 7.1L10.7 2.5Z" fill="#3f0c87"/><path d="M9.8 3.4L14.4 8L5.2 17.2L0.6 17.2L0.6 12.6Z" fill="#3f0c87"/><path d="M2.2 13.4L11.2 4.4" stroke="#fff" stroke-width="0.9"/><path d="M1.2 14.6L2.6 16.1" stroke="#fff" stroke-width="1"/></svg>
<svg class="a" style="left:1192px;top:455.8px" width="15" height="20" viewBox="0 0 15 20"><path d="M0 0.3H10L14.8 5.1V19.5H0Z" fill="#c91f28"/><path d="M10 0.3V5.1H14.8Z" fill="#f2d0b0"/><path d="M6.8 2.5C6.2 5 5.5 8 3.5 11.5M5.2 9.5L11.5 9.2M7.5 6L10.5 10.5" stroke="#a0141b" stroke-width="0.9" fill="none"/><rect x="0" y="18.2" width="14.8" height="1.3" fill="#a0141b"/><text x="1.8" y="17.6" font-family="Liberation Sans" font-size="5.6" font-weight="bold" fill="#f5d5dc">PDF</text></svg>
<svg class="a" style="left:1215.5px;top:456.0px" width="18" height="20" viewBox="0 0 18 20"><path d="M0.8 0.8H12.2L17.2 5.8V19.2H0.8Z" fill="none" stroke="#222" stroke-width="1.15"/><path d="M12.2 0.8L17.2 5.8V8.8H12.2Z" fill="#222"/><path d="M6.8 0.8V19.2M0.8 9.2H12.2M12.2 9.2H17.2" stroke="#222" stroke-width="0.9"/><circle cx="6.6" cy="9.2" r="3.3" fill="#fff" stroke="#222" stroke-width="0.9"/><circle cx="6.6" cy="9.2" r="0.8" fill="#222"/><path d="M6.6 5.9V12.5M3.3 9.2H9.9" stroke="#222" stroke-width="0.5"/></svg>
<svg class="a" style="left:1242px;top:456.0px" width="17" height="20" viewBox="0 0 17 20"><path d="M0.8 0.8H11L16.2 6V19.2H0.8Z" fill="#fff" stroke="#333" stroke-width="1.3"/><path d="M11 0.8V6H16.2" fill="none" stroke="#333" stroke-width="1"/><path d="M3 6.2H7.5M3 9.8H14M3 12.4H14M3 15H14" stroke="#333" stroke-width="1.2"/></svg>
<div class="a" style="left:1266px;top:454.5px;width:11.5px;height:18px;overflow:hidden"><svg width="20" height="17" viewBox="0 0 20 17"><path d="M10.5 1.2C5.3 1.2 1.2 3.8 1.2 7.2C1.2 9 2.3 10.6 4.2 11.7L2.6 15.8L7.6 13C8.6 13.2 9.5 13.3 10.5 13.3C15.6 13.3 19 10.6 19 7.2S15.6 1.2 10.5 1.2Z" fill="none" stroke="#3f0c87" stroke-width="1.7"/></svg></div>
<svg class="a" style="left:1164.5px;top:483.5px" width="18" height="18" viewBox="0 0 18 18"><circle cx="8.8" cy="8.6" r="7.3" fill="none" stroke="#000" stroke-width="2.5"/><path d="M3.6 13.8L14 3.4" stroke="#000" stroke-width="2.5"/></svg>
<svg class="a" style="left:1189.5px;top:485.5px" width="20" height="15" viewBox="0 0 20 15"><path d="M0.5 4H15.5" stroke="#3f0c87" stroke-width="2.4"/><path d="M14.2 0L19.6 4L14.2 8L15.2 4Z" fill="#3f0c87"/><path d="M4.5 11H19.5" stroke="#3f0c87" stroke-width="2.4"/><path d="M5.8 7L0.4 11L5.8 15L4.8 11Z" fill="#3f0c87"/></svg>
<svg class="a" style="left:1215.5px;top:483.7px" width="19" height="17" viewBox="0 0 19 17"><rect x="0" y="0" width="19" height="4.2" rx="0.8" fill="#3f0c87"/><rect x="1.2" y="5.1" width="16.6" height="11.9" fill="#3f0c87"/><rect x="7.2" y="7.5" width="4.6" height="1.7" fill="#fff"/></svg>
<svg class="a" style="left:1243px;top:483.7px" width="16" height="17" viewBox="0 0 16 17"><circle cx="8" cy="4.3" r="4.3" fill="#3f0c87"/><path d="M0 15.2V13.2C0 10.6 2 9 4 8.6C5 9.5 6.4 10 8 10S11 9.5 12 8.6C14 9 16 10.6 16 13.2V15.2Q16 17 14.2 17H1.8Q0 17 0 15.2Z" fill="#3f0c87"/></svg>
<div class="a" style="left:21px;top:581.5px;width:1256px;height:1.5px;background:#dadada"></div>
<div class="cb" style="left:26px;top:539.0px;width:19.5px;height:19.5px"></div>
<div class="a t" style="left:61px;top:542.24px;font-size:12px;line-height:13.8px;color:#3c3c3c;transform:scaleX(0.958);transform-origin:0 0;">16</div>
<div class="a t" style="left:132.5px;top:531.29px;font-size:12px;line-height:16.5px;color:#3c3c3c;transform:scaleX(0.958);transform-origin:0 0;">Company<br>Document</div>
<div class="a t" style="left:198px;top:542.24px;font-size:12px;line-height:13.8px;color:#43118f;transform:scaleX(0.958);transform-origin:0 0;"><span class="lk">CDOC1</span></div>
<div class="a t" style="left:296px;top:542.24px;font-size:12px;line-height:13.8px;color:#3c3c3c;transform:scaleX(0.958);transform-origin:0 0;">N/A</div>
<div class="a t" style="left:370px;top:542.24px;font-size:12px;line-height:13.8px;color:#43118f;transform:scaleX(0.958);transform-origin:0 0;"><span class="lk">Aedrix</span></div>
<div class="a t" style="left:441.2px;top:531.29px;font-size:12px;line-height:16.5px;color:#43118f;transform:scaleX(0.958);transform-origin:0 0;"><span class="lk">Custom</span><br><span class="lk">Documents</span></div>
<div class="a t" style="left:511px;top:542.24px;font-size:12px;line-height:13.8px;color:#3c3c3c;transform:scaleX(0.958);transform-origin:0 0;">12/03/2025</div>
<div class="a t" style="left:580px;top:531.29px;font-size:12px;line-height:16.5px;color:#43118f;transform:scaleX(0.958);transform-origin:0 0;"><span class="lk">CDOC</span><br><span class="lk">1</span></div>
<div class="a t" style="left:624.2px;top:523.54px;font-size:12px;line-height:16.6px;color:#3c3c3c;transform:scaleX(0.958);transform-origin:0 0;">12/03/2025<br>08:07<br>2 weeks ago</div>
<div class="a t" style="left:722.5px;top:541.74px;font-size:12px;line-height:13.8px;color:#3c3c3c;transform:scaleX(0.958);transform-origin:0 0;">--</div>
<div class="a t" style="left:782px;top:531.29px;font-size:12px;line-height:16.5px;color:#3c3c3c;transform:scaleX(0.958);transform-origin:0 0;">Jatinder<br>Singh</div>
<div class="a t" style="left:848.8px;top:529.49px;font-size:12px;line-height:16.5px;color:#3c3c3c;transform:scaleX(0.958);transform-origin:0 0;">Jatinder<br>Singh</div>
<div class="a t" style="left:928.5px;top:529.49px;font-size:12px;line-height:16.5px;color:#3c3c3c;transform:scaleX(0.958);transform-origin:0 0;">Jatinder<br>Singh</div>
<div class="a t" style="left:997px;top:542.24px;font-size:12px;line-height:13.8px;color:#f0a12e;transform:scaleX(0.958);transform-origin:0 0;"><span class="lk" style="color:#f0a12e">29/03/2025</span></div>
<svg class="a" style="left:1101px;top:531.5px" width="18" height="17" viewBox="0 0 18 17"><path d="M1 16.2C1 13 2.6 11.5 4.5 10.8C3.2 9.8 2.6 8.3 2.6 6.3C2.6 3 4.3 1 6.8 1C8.9 1 10.5 2.6 10.8 5" fill="none" stroke="#3f0c87" stroke-width="1.4"/><path d="M1 16.2H8" stroke="#3f0c87" stroke-width="1.4"/><circle cx="12.6" cy="11.6" r="4.4" fill="none" stroke="#3f0c87" stroke-width="1.3"/><path d="M12.6 9.5V13.7M10.5 11.6H14.7" stroke="#3f0c87" stroke-width="1.1"/></svg>
<svg class="a" style="left:1164.5px;top:521.8px" width="18" height="17" viewBox="0 0 18 17"><path d="M12.6 0.6L17.2 5.2L15.3 7.1L10.7 2.5Z" fill="#3f0c87"/><path d="M9.8 3.4L14.4 8L5.2 17.2L0.6 17.2L0.6 12.6Z" fill="#3f0c87"/><path d="M2.2 13.4L11.2 4.4" stroke="#fff" stroke-width="0.9"/><path d="M1.2 14.6L2.6 16.1" stroke="#fff" stroke-width="1"/></svg>
<svg class="a" style="left:1192px;top:523.8px" width="15" height="20" viewBox="0 0 15 20"><path d="M0 0.3H10L14.8 5.1V19.5H0Z" fill="#c91f28"/><path d="M10 0.3V5.1H14.8Z" fill="#f2d0b0"/><path d="M6.8 2.5C6.2 5 5.5 8 3.5 11.5M5.2 9.5L11.5 9.2M7.5 6L10.5 10.5" stroke="#a0141b" stroke-width="0.9" fill="none"/><rect x="0" y="18.2" width="14.8" height="1.3" fill="#a0141b"/><text x="1.8" y="17.6" font-family="Liberation Sans" font-size="5.6" font-weight="bold" fill="#f5d5dc">PDF</text></svg>
<svg class="a" style="left:1215.5px;top:524.0px" width="18" height="20" viewBox="0 0 18 20"><path d="M0.8 0.8H12.2L17.2 5.8V19.2H0.8Z" fill="none" stroke="#222" stroke-width="1.15"/><path d="M12.2 0.8L17.2 5.8V8.8H12.2Z" fill="#222"/><path d="M6.8 0.8V19.2M0.8 9.2H12.2M12.2 9.2H17.2" stroke="#222" stroke-width="0.9"/><circle cx="6.6" cy="9.2" r="3.3" fill="#fff" stroke="#222" stroke-width="0.9"/><circle cx="6.6" cy="9.2" r="0.8" fill="#222"/><path d="M6.6 5.9V12.5M3.3 9.2H9.9" stroke="#222" stroke-width="0.5"/></svg>
<svg class="a" style="left:1242px;top:524.0px" width="17" height="20" viewBox="0 0 17 20"><path d="M0.8 0.8H11L16.2 6V19.2H0.8Z" fill="#fff" stroke="#333" stroke-width="1.3"/><path d="M11 0.8V6H16.2" fill="none" stroke="#333" stroke-width="1"/><path d="M3 6.2H7.5M3 9.8H14M3 12.4H14M3 15H14" stroke="#333" stroke-width="1.2"/></svg>
<div class="a" style="left:1266px;top:522.5px;width:11.5px;height:18px;overflow:hidden"><svg width="20" height="17" viewBox="0 0 20 17"><path d="M10.5 1.2C5.3 1.2 1.2 3.8 1.2 7.2C1.2 9 2.3 10.6 4.2 11.7L2.6 15.8L7.6 13C8.6 13.2 9.5 13.3 10.5 13.3C15.6 13.3 19 10.6 19 7.2S15.6 1.2 10.5 1.2Z" fill="none" stroke="#3f0c87" stroke-width="1.7"/></svg></div>
<svg class="a" style="left:1164.5px;top:551.5px" width="18" height="18" viewBox="0 0 18 18"><circle cx="8.8" cy="8.6" r="7.3" fill="none" stroke="#000" stroke-width="2.5"/><path d="M3.6 13.8L14 3.4" stroke="#000" stroke-width="2.5"/></svg>
<svg class="a" style="left:1189.5px;top:553.5px" width="20" height="15" viewBox="0 0 20 15"><path d="M0.5 4H15.5" stroke="#3f0c87" stroke-width="2.4"/><path d="M14.2 0L19.6 4L14.2 8L15.2 4Z" fill="#3f0c87"/><path d="M4.5 11H19.5" stroke="#3f0c87" stroke-width="2.4"/><path d="M5.8 7L0.4 11L5.8 15L4.8 11Z" fill="#3f0c87"/></svg>
<svg class="a" style="left:1215.5px;top:551.7px" width="19" height="17" viewBox="0 0 19 17"><rect x="0" y="0" width="19" height="4.2" rx="0.8" fill="#3f0c87"/><rect x="1.2" y="5.1" width="16.6" height="11.9" fill="#3f0c87"/><rect x="7.2" y="7.5" width="4.6" height="1.7" fill="#fff"/></svg>
<svg class="a" style="left:1243px;top:551.7px" width="16" height="17" viewBox="0 0 16 17"><circle cx="8" cy="4.3" r="4.3" fill="#3f0c87"/><path d="M0 15.2V13.2C0 10.6 2 9 4 8.6C5 9.5 6.4 10 8 10S11 9.5 12 8.6C14 9 16 10.6 16 13.2V15.2Q16 17 14.2 17H1.8Q0 17 0 15.2Z" fill="#3f0c87"/></svg>
<div class="a" style="left:21px;top:649.0px;width:1256px;height:1.5px;background:#dadada"></div>
<div class="cb" style="left:26px;top:606.5px;width:19.5px;height:19.5px"></div>
<div class="a t" style="left:61px;top:609.74px;font-size:12px;line-height:13.8px;color:#3c3c3c;transform:scaleX(0.958);transform-origin:0 0;">15</div>
<div class="a t" style="left:132.5px;top:598.79px;font-size:12px;line-height:16.5px;color:#3c3c3c;transform:scaleX(0.958);transform-origin:0 0;">Project<br>Document</div>
<div class="a t" style="left:198px;top:609.74px;font-size:12px;line-height:13.8px;color:#43118f;transform:scaleX(0.958);transform-origin:0 0;"><span class="lk">PDOC1</span></div>
<div class="a t" style="left:296px;top:609.74px;font-size:12px;line-height:13.8px;color:#3c3c3c;transform:scaleX(0.958);transform-origin:0 0;">N/A</div>
<div class="a t" style="left:370px;top:609.74px;font-size:12px;line-height:13.8px;color:#43118f;transform:scaleX(0.958);transform-origin:0 0;"><span class="lk">Aedrix</span></div>
<div class="a t" style="left:441.2px;top:598.79px;font-size:12px;line-height:16.5px;color:#43118f;transform:scaleX(0.958);transform-origin:0 0;"><span class="lk">Outer</span><br><span class="lk">Layout</span></div>
<div class="a t" style="left:511px;top:609.74px;font-size:12px;line-height:13.8px;color:#3c3c3c;transform:scaleX(0.958);transform-origin:0 0;">12/03/2025</div>
<div class="a t" style="left:580px;top:598.79px;font-size:12px;line-height:16.5px;color:#43118f;transform:scaleX(0.958);transform-origin:0 0;"><span class="lk">PDOC</span><br><span class="lk">1</span></div>
<div class="a t" style="left:624.2px;top:591.04px;font-size:12px;line-height:16.6px;color:#3c3c3c;transform:scaleX(0.958);transform-origin:0 0;">12/03/2025<br>08:08<br>2 weeks ago</div>
<div class="a t" style="left:722.5px;top:609.24px;font-size:12px;line-height:13.8px;color:#3c3c3c;transform:scaleX(0.958);transform-origin:0 0;">--</div>
<div class="a t" style="left:782px;top:598.79px;font-size:12px;line-height:16.5px;color:#3c3c3c;transform:scaleX(0.958);transform-origin:0 0;">Jatinder<br>Singh</div>
<div class="a t" style="left:848.8px;top:596.99px;font-size:12px;line-height:16.5px;color:#3c3c3c;transform:scaleX(0.958);transform-origin:0 0;">Jatinder<br>Singh</div>
<div class="a t" style="left:928.5px;top:596.99px;font-size:12px;line-height:16.5px;color:#3c3c3c;transform:scaleX(0.958);transform-origin:0 0;">Jatinder<br>Singh</div>
<div class="a t" style="left:997px;top:609.74px;font-size:12px;line-height:13.8px;color:#f0a12e;transform:scaleX(0.958);transform-origin:0 0;"><span class="lk" style="color:#f0a12e">28/03/2025</span></div>
<svg class="a" style="left:1101px;top:599px" width="18" height="17" viewBox="0 0 18 17"><path d="M1 16.2C1 13 2.6 11.5 4.5 10.8C3.2 9.8 2.6 8.3 2.6 6.3C2.6 3 4.3 1 6.8 1C8.9 1 10.5 2.6 10.8 5" fill="none" stroke="#3f0c87" stroke-width="1.4"/><path d="M1 16.2H8" stroke="#3f0c87" stroke-width="1.4"/><circle cx="12.6" cy="11.6" r="4.4" fill="none" stroke="#3f0c87" stroke-width="1.3"/><path d="M12.6 9.5V13.7M10.5 11.6H14.7" stroke="#3f0c87" stroke-width="1.1"/></svg>
<svg class="a" style="left:1164.5px;top:589.3px" width="18" height="17" viewBox="0 0 18 17"><path d="M12.6 0.6L17.2 5.2L15.3 7.1L10.7 2.5Z" fill="#555"/><path d="M9.8 3.4L14.4 8L5.2 17.2L0.6 17.2L0.6 12.6Z" fill="#555"/><path d="M2.2 13.4L11.2 4.4" stroke="#fff" stroke-width="0.9"/><path d="M1.2 14.6L2.6 16.1" stroke="#fff" stroke-width="1"/></svg>
<svg class="a" style="left:1192px;top:591.3px" width="15" height="20" viewBox="0 0 15 20"><path d="M0 0.3H10L14.8 5.1V19.5H0Z" fill="#b8b8b8"/><path d="M10 0.3V5.1H14.8Z" fill="#e0e0e0"/><path d="M6.8 2.5C6.2 5 5.5 8 3.5 11.5M5.2 9.5L11.5 9.2M7.5 6L10.5 10.5" stroke="#8f8f8f" stroke-width="0.9" fill="none"/><rect x="0" y="18.2" width="14.8" height="1.3" fill="#8f8f8f"/><text x="1.8" y="17.6" font-family="Liberation Sans" font-size="5.6" font-weight="bold" fill="#7a7a7a">PDF</text></svg>
<svg class="a" style="left:1215.5px;top:591.5px" width="18" height="20" viewBox="0 0 18 20"><path d="M0.8 0.8H12.2L17.2 5.8V19.2H0.8Z" fill="none" stroke="#222" stroke-width="1.15"/><path d="M12.2 0.8L17.2 5.8V8.8H12.2Z" fill="#222"/><path d="M6.8 0.8V19.2M0.8 9.2H12.2M12.2 9.2H17.2" stroke="#222" stroke-width="0.9"/><circle cx="6.6" cy="9.2" r="3.3" fill="#fff" stroke="#222" stroke-width="0.9"/><circle cx="6.6" cy="9.2" r="0.8" fill="#222"/><path d="M6.6 5.9V12.5M3.3 9.2H9.9" stroke="#222" stroke-width="0.5"/></svg>
<svg class="a" style="left:1242px;top:591.5px" width="17" height="20" viewBox="0 0 17 20"><path d="M0.8 0.8H11L16.2 6V19.2H0.8Z" fill="#fff" stroke="#5a2ab5" stroke-width="1.3"/><path d="M11 0.8V6H16.2" fill="none" stroke="#5a2ab5" stroke-width="1"/><path d="M3 6.2H7.5M3 9.8H14M3 12.4H14M3 15H14" stroke="#5a2ab5" stroke-width="1.2"/></svg>
<div class="a" style="left:1266px;top:590px;width:11.5px;height:18px;overflow:hidden"><svg width="20" height="17" viewBox="0 0 20 17"><path d="M10.5 1.2C5.3 1.2 1.2 3.8 1.2 7.2C1.2 9 2.3 10.6 4.2 11.7L2.6 15.8L7.6 13C8.6 13.2 9.5 13.3 10.5 13.3C15.6 13.3 19 10.6 19 7.2S15.6 1.2 10.5 1.2Z" fill="none" stroke="#3f0c87" stroke-width="1.7"/></svg></div>
<svg class="a" style="left:1164.5px;top:619px" width="18" height="18" viewBox="0 0 18 18"><circle cx="8.8" cy="8.6" r="7.3" fill="none" stroke="#000" stroke-width="2.5"/><path d="M3.6 13.8L14 3.4" stroke="#000" stroke-width="2.5"/></svg>
<svg class="a" style="left:1189.5px;top:621px" width="20" height="15" viewBox="0 0 20 15"><path d="M0.5 4H15.5" stroke="#3f0c87" stroke-width="2.4"/><path d="M14.2 0L19.6 4L14.2 8L15.2 4Z" fill="#3f0c87"/><path d="M4.5 11H19.5" stroke="#3f0c87" stroke-width="2.4"/><path d="M5.8 7L0.4 11L5.8 15L4.8 11Z" fill="#3f0c87"/></svg>
<svg class="a" style="left:1215.5px;top:619.2px" width="19" height="17" viewBox="0 0 19 17"><rect x="0" y="0" width="19" height="4.2" rx="0.8" fill="#3f0c87"/><rect x="1.2" y="5.1" width="16.6" height="11.9" fill="#3f0c87"/><rect x="7.2" y="7.5" width="4.6" height="1.7" fill="#fff"/></svg>
<svg class="a" style="left:1243px;top:619.2px" width="16" height="17" viewBox="0 0 16 17"><circle cx="8" cy="4.3" r="4.3" fill="#3f0c87"/><path d="M0 15.2V13.2C0 10.6 2 9 4 8.6C5 9.5 6.4 10 8 10S11 9.5 12 8.6C14 9 16 10.6 16 13.2V15.2Q16 17 14.2 17H1.8Q0 17 0 15.2Z" fill="#3f0c87"/></svg>
<div class="cb" style="left:26px;top:674.0px;width:19.5px;height:19.5px"></div>
<div class="a t" style="left:61px;top:677.24px;font-size:12px;line-height:13.8px;color:#3c3c3c;transform:scaleX(0.958);transform-origin:0 0;">11</div>
<div class="a t" style="left:132.5px;top:666.29px;font-size:12px;line-height:16.5px;color:#3c3c3c;transform:scaleX(0.958);transform-origin:0 0;">Project<br>Drawing</div>
<div class="a t" style="left:198px;top:677.24px;font-size:12px;line-height:13.8px;color:#43118f;transform:scaleX(0.958);transform-origin:0 0;"><span class="lk">arch_11</span></div>
<div class="a t" style="left:296px;top:677.24px;font-size:12px;line-height:13.8px;color:#43118f;transform:scaleX(0.958);transform-origin:0 0;"><span class="lk">11</span></div>
<div class="a t" style="left:370px;top:677.24px;font-size:12px;line-height:13.8px;color:#43118f;transform:scaleX(0.958);transform-origin:0 0;"><span class="lk">Aedrix</span></div>
<div class="a t" style="left:441.2px;top:677.24px;font-size:12px;line-height:13.8px;color:#43118f;transform:scaleX(0.958);transform-origin:0 0;"><span class="lk">Architect</span></div>
<div class="a t" style="left:511px;top:677.24px;font-size:12px;line-height:13.8px;color:#3c3c3c;transform:scaleX(0.958);transform-origin:0 0;">10/03/2025</div>
<div class="a t" style="left:580px;top:677.24px;font-size:12px;line-height:13.8px;color:#43118f;transform:scaleX(0.958);transform-origin:0 0;"><span class="lk">Rev 1</span></div>
<div class="a t" style="left:624.2px;top:658.54px;font-size:12px;line-height:16.6px;color:#3c3c3c;transform:scaleX(0.958);transform-origin:0 0;">10/03/2025<br>13:29<br>2 weeks ago</div>
<div class="a t" style="left:722.5px;top:676.74px;font-size:12px;line-height:13.8px;color:#3c3c3c;transform:scaleX(0.958);transform-origin:0 0;">--</div>
<div class="a t" style="left:782px;top:666.29px;font-size:12px;line-height:16.5px;color:#3c3c3c;transform:scaleX(0.958);transform-origin:0 0;">Jatinder<br>Singh</div>
<div class="a t" style="left:848.8px;top:664.49px;font-size:12px;line-height:16.5px;color:#3c3c3c;transform:scaleX(0.958);transform-origin:0 0;">Jatinder<br>Singh</div>
<div class="a t" style="left:928.5px;top:664.49px;font-size:12px;line-height:16.5px;color:#3c3c3c;transform:scaleX(0.958);transform-origin:0 0;">Jatinder<br>Singh</div>
<div class="a t" style="left:997px;top:677.24px;font-size:12px;line-height:13.8px;color:#3b8a3b;transform:scaleX(0.958);transform-origin:0 0;"><span class="lk" style="color:#3b8a3b">31/03/2025</span></div>
<svg class="a" style="left:1101px;top:666.5px" width="18" height="17" viewBox="0 0 18 17"><path d="M1 16.2C1 13 2.6 11.5 4.5 10.8C3.2 9.8 2.6 8.3 2.6 6.3C2.6 3 4.3 1 6.8 1C8.9 1 10.5 2.6 10.8 5" fill="none" stroke="#3f0c87" stroke-width="1.4"/><path d="M1 16.2H8" stroke="#3f0c87" stroke-width="1.4"/><circle cx="12.6" cy="11.6" r="4.4" fill="none" stroke="#3f0c87" stroke-width="1.3"/><path d="M12.6 9.5V13.7M10.5 11.6H14.7" stroke="#3f0c87" stroke-width="1.1"/></svg>
<svg class="a" style="left:1164.5px;top:656.8px" width="18" height="17" viewBox="0 0 18 17"><path d="M12.6 0.6L17.2 5.2L15.3 7.1L10.7 2.5Z" fill="#3f0c87"/><path d="M9.8 3.4L14.4 8L5.2 17.2L0.6 17.2L0.6 12.6Z" fill="#3f0c87"/><path d="M2.2 13.4L11.2 4.4" stroke="#fff" stroke-width="0.9"/><path d="M1.2 14.6L2.6 16.1" stroke="#fff" stroke-width="1"/></svg>
<svg class="a" style="left:1192px;top:658.8px" width="15" height="20" viewBox="0 0 15 20"><path d="M0 0.3H10L14.8 5.1V19.5H0Z" fill="#c91f28"/><path d="M10 0.3V5.1H14.8Z" fill="#f2d0b0"/><path d="M6.8 2.5C6.2 5 5.5 8 3.5 11.5M5.2 9.5L11.5 9.2M7.5 6L10.5 10.5" stroke="#a0141b" stroke-width="0.9" fill="none"/><rect x="0" y="18.2" width="14.8" height="1.3" fill="#a0141b"/><text x="1.8" y="17.6" font-family="Liberation Sans" font-size="5.6" font-weight="bold" fill="#f5d5dc">PDF</text></svg>
<svg class="a" style="left:1215.5px;top:659.0px" width="18" height="20" viewBox="0 0 18 20"><path d="M0.8 0.8H12.2L17.2 5.8V19.2H0.8Z" fill="none" stroke="#222" stroke-width="1.15"/><path d="M12.2 0.8L17.2 5.8V8.8H12.2Z" fill="#222"/><path d="M6.8 0.8V19.2M0.8 9.2H12.2M12.2 9.2H17.2" stroke="#222" stroke-width="0.9"/><circle cx="6.6" cy="9.2" r="3.3" fill="#fff" stroke="#222" stroke-width="0.9"/><circle cx="6.6" cy="9.2" r="0.8" fill="#222"/><path d="M6.6 5.9V12.5M3.3 9.2H9.9" stroke="#222" stroke-width="0.5"/></svg>
<svg class="a" style="left:1242px;top:659.0px" width="17" height="20" viewBox="0 0 17 20"><path d="M0.8 0.8H11L16.2 6V19.2H0.8Z" fill="#fff" stroke="#333" stroke-width="1.3"/><path d="M11 0.8V6H16.2" fill="none" stroke="#333" stroke-width="1"/><path d="M3 6.2H7.5M3 9.8H14M3 12.4H14M3 15H14" stroke="#333" stroke-width="1.2"/></svg>
<div class="a" style="left:1266px;top:657.5px;width:11.5px;height:18px;overflow:hidden"><svg width="20" height="17" viewBox="0 0 20 17"><path d="M10.5 1.2C5.3 1.2 1.2 3.8 1.2 7.2C1.2 9 2.3 10.6 4.2 11.7L2.6 15.8L7.6 13C8.6 13.2 9.5 13.3 10.5 13.3C15.6 13.3 19 10.6 19 7.2S15.6 1.2 10.5 1.2Z" fill="#3f0c87" stroke="#3f0c87" stroke-width="1.7"/></svg></div>
<svg class="a" style="left:1164.5px;top:686.5px" width="18" height="18" viewBox="0 0 18 18"><circle cx="8.8" cy="8.6" r="7.3" fill="none" stroke="#000" stroke-width="2.5"/><path d="M3.6 13.8L14 3.4" stroke="#000" stroke-width="2.5"/></svg>
<svg class="a" style="left:1189.5px;top:688.5px" width="20" height="15" viewBox="0 0 20 15"><path d="M0.5 4H15.5" stroke="#3f0c87" stroke-width="2.4"/><path d="M14.2 0L19.6 4L14.2 8L15.2 4Z" fill="#3f0c87"/><path d="M4.5 11H19.5" stroke="#3f0c87" stroke-width="2.4"/><path d="M5.8 7L0.4 11L5.8 15L4.8 11Z" fill="#3f0c87"/></svg>
<svg class="a" style="left:1215.5px;top:686.7px" width="19" height="17" viewBox="0 0 19 17"><rect x="0" y="0" width="19" height="4.2" rx="0.8" fill="#3f0c87"/><rect x="1.2" y="5.1" width="16.6" height="11.9" fill="#3f0c87"/><rect x="7.2" y="7.5" width="4.6" height="1.7" fill="#fff"/></svg>
<svg class="a" style="left:1243px;top:686.7px" width="16" height="17" viewBox="0 0 16 17"><circle cx="8" cy="4.3" r="4.3" fill="#3f0c87"/><path d="M0 15.2V13.2C0 10.6 2 9 4 8.6C5 9.5 6.4 10 8 10S11 9.5 12 8.6C14 9 16 10.6 16 13.2V15.2Q16 17 14.2 17H1.8Q0 17 0 15.2Z" fill="#3f0c87"/></svg>
<div class="a" style="left:23px;top:737px;width:1252px;height:15px;background:#f9f9f9"></div>
<svg class="a" style="left:25px;top:740px" width="7" height="9" viewBox="0 0 7 9"><path d="M6 0.5V8.5L1 4.5Z" fill="#777"/></svg>
<div class="a" style="left:39px;top:739px;width:1078px;height:10px;border-radius:5px;background:#8c8c8c"></div>
<svg class="a" style="left:1265px;top:740px" width="7" height="9" viewBox="0 0 7 9"><path d="M1 0.5V8.5L6 4.5Z" fill="#777"/></svg>
<div class="a" style="left:1277px;top:207px;width:1px;height:560px;background:#dcdcdf"></div>
</body></html>
